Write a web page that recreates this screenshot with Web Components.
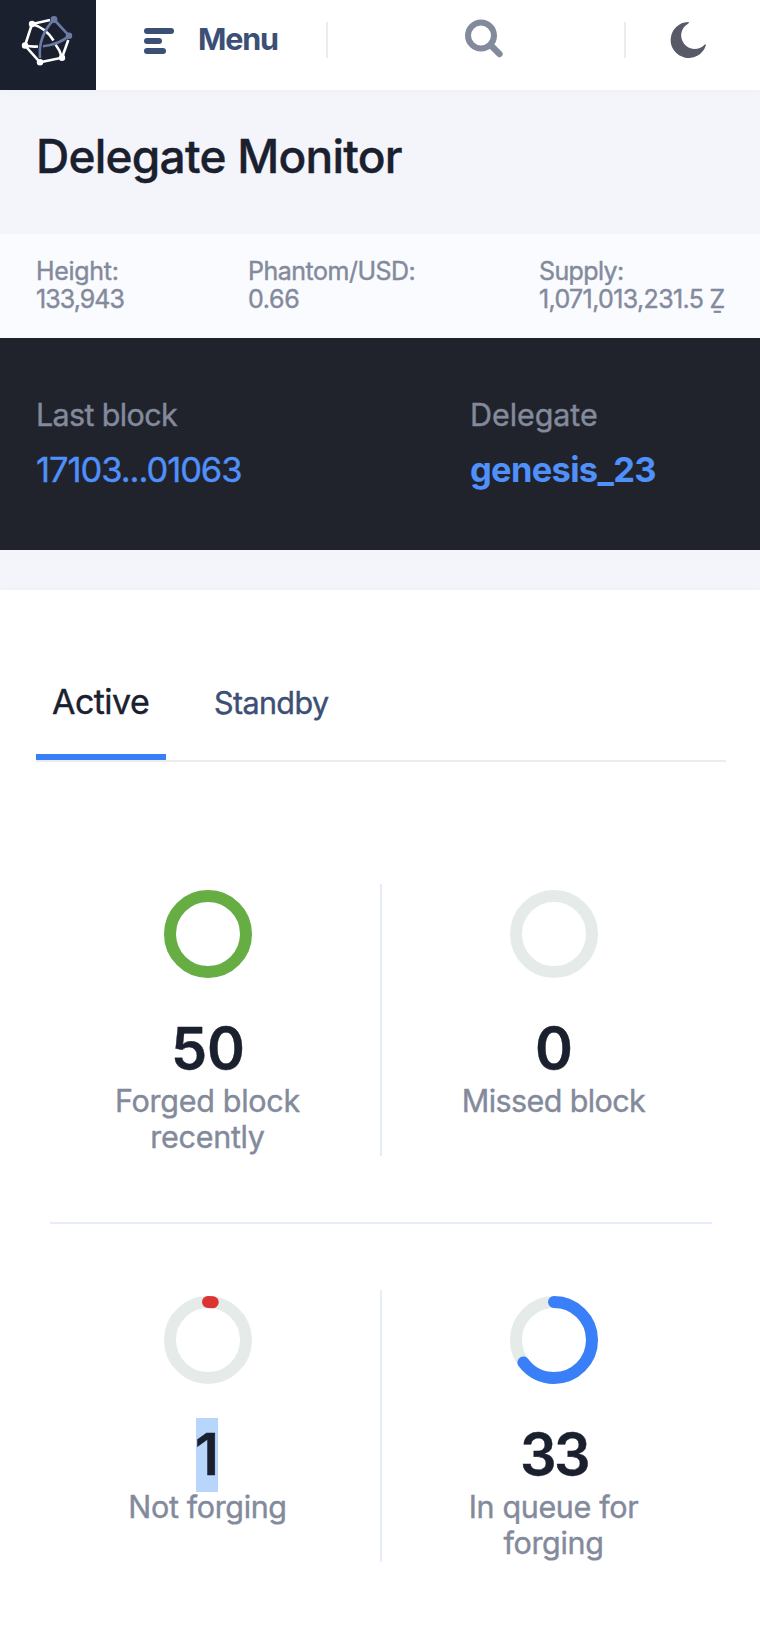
<!DOCTYPE html>
<html lang="en">
<head>
<meta charset="utf-8">
<title>Delegate Monitor</title>
<style>
  html, body { margin: 0; }
  body { background: #f4f5fa; font-family: Inter, "Liberation Sans", sans-serif; font-weight: 400; color: #1a202e; -webkit-text-stroke: .4px currentColor; }
</style>
</head>
<body>
<explorer-app></explorer-app>
<script>
const define = (name, html, setup) => {
  const template = document.createElement('template');
  template.innerHTML = html;
  customElements.define(name, class extends HTMLElement {
    connectedCallback() {
      if (this.shadowRoot) return;
      const root = this.attachShadow({ mode: 'open' });
      root.append(template.content.cloneNode(true));
      if (setup) setup(this, root);
    }
  });
};

define('network-logo', `
  <style>:host{display:block;flex:none;width:96px;height:90px;background:#1a202e}svg{display:block}</style>
  <svg width="96" height="90" viewBox="0 0 96 90" fill="none" stroke="#fff" stroke-width="2.6">
    <path d="M50 20 32 24 25 45.500 40 62.300 62 57.700 68.300 40M32 24Q46 28 53.500 40.500M55.500 44.500Q60 50 62 57.700M25 45.500Q31 47 38 46.500"/>
    <path stroke="#6b7aa3" d="M54 19.500 69 35.700Q60 44 43 46.300M54 19.500Q38 36 40 58"/>
    <g fill="#fff" stroke="none"><circle cx="32" cy="24" r="3.200"/><circle cx="62" cy="57.700" r="3.200"/><circle cx="40" cy="62.300" r="3.200"/><circle cx="25" cy="45.500" r="3.200"/></g>
    <g fill="#6b7aa3" stroke="none"><circle cx="54" cy="19.500" r="3.400"/><circle cx="69" cy="35.700" r="3.200"/></g>
  </svg>`);

define('app-header', `
  <style>
    :host{display:flex;height:90px;background:#fff;box-shadow:0 2px 8px rgba(40,50,110,.02)}
    .cell{box-sizing:border-box;height:80px;display:flex;align-items:center}
    .menu{width:230px;padding-left:48px;gap:24px;color:#3c4f75;font:700 30.5px/36px Inter,sans-serif;letter-spacing:-1.19px;-webkit-text-stroke:0}
    .menu span{margin-top:-2px}
    .menu svg{margin-top:2px}
    .search{width:296px;padding:0 0 4px 15px;justify-content:center}
    .theme{width:134px;padding-left:44px}
    i{width:2px;height:36px;margin-top:22px;background:#ececee;flex:none}
    svg{display:block;flex:none}
  </style>
  <network-logo></network-logo>
  <div class="cell menu">
    <svg width="30" height="26" fill="#3c4f75"><rect width="30" height="6" rx="3"/><rect y="10" width="18" height="6" rx="3"/><rect y="20" width="22" height="6" rx="3"/></svg>
    <span>Menu</span>
  </div>
  <i></i>
  <div class="cell search">
    <svg width="40" height="44" viewBox="464 15 40 44" fill="none" stroke="#838a9c" stroke-width="6" stroke-linecap="round"><circle cx="481" cy="34.500" r="13"/><path d="M490.500 44 499.500 53" stroke-width="6.400"/></svg>
  </div>
  <i></i>
  <div class="cell theme">
    <svg width="36" height="36" viewBox="670 22 36 36"><path fill="#585a68" d="M688 22A18 18 0 1 0 705.800 45.500Q706.200 43.500 704.500 44.700A13.500 13.500 0 1 1 688 23.700Q690 22.200 688 22Z"/></svg>
  </div>`);

define('page-title', `
  <style>
    :host{display:block;box-sizing:border-box;height:144px;padding:38px 36px 0}
    h1{margin:0;font:500 46px/56px Inter,sans-serif;letter-spacing:-.75px;color:#1a202e}
  </style><h1><slot></slot></h1>`);

define('info-item', `
  <style>
    :host{display:block;font-size:25px;line-height:28px;color:#838a9c;white-space:nowrap}
    div{letter-spacing:var(--a)} .v{letter-spacing:var(--b)}
  </style><div><slot name="label"></slot></div><div class="v"><slot></slot></div>`);

define('info-bar', `
  <style>
    :host{display:grid;grid-template-columns:212px 291px 1fr;box-sizing:border-box;height:104px;padding:23px 34px 0 36px;background:#fafbff}
  </style>
  <info-item style="--a:-.3px;--b:-.95px"><span slot="label">Height:</span>133,943</info-item>
  <info-item style="--a:-.5px;--b:-.3px"><span slot="label">Phantom/USD:</span>0.66</info-item>
  <info-item style="--a:-.61px;--b:-.64px"><span slot="label">Supply:</span>1,071,013,231.5 Ẕ</info-item>`);

define('last-block', `
  <style>
    :host{display:grid;grid-template-columns:434px 1fr;box-sizing:border-box;height:212px;padding:59px 36px 0;background:#20232b}
    .label{font-size:30.5px;line-height:36px;color:#838a9c;letter-spacing:-.64px}
    .value{display:block;margin-top:17px;font-size:34.5px;line-height:40px;color:#4f90fa;letter-spacing:-1.05px}
    .value.name{font-weight:700;letter-spacing:-.7px;-webkit-text-stroke:0}
  </style>
  <div><div class="label">Last block</div><a class="value">17103...01063</a></div>
  <div><div class="label" style="letter-spacing:-.07px">Delegate</div><a class="value name">genesis_23</a></div>`);

define('tab-bar', `
  <style>
    :host{display:flex;align-items:baseline;gap:32px;box-sizing:border-box;height:80px;margin:0 34px 0 36px;border-bottom:2px solid #ececee}
    .tab{box-sizing:border-box;height:78px;padding:0 16px;font-size:30.5px;line-height:40px;color:#3c4f75;letter-spacing:-.62px}
    .on{width:130px;font-size:34px;color:#1a202e;letter-spacing:-.55px;border-bottom:6px solid #387ff8}
  </style>
  <div class="tab on">Active</div><div class="tab">Standby</div>`);

define('progress-ring', `
  <style>:host{display:block;width:88px;height:88px}svg{display:block}</style>
  <svg width="88" height="88" viewBox="0 0 88 88" fill="none" stroke-width="12">
    <circle cx="44" cy="44" r="38" stroke="#e4ebe8"/>
    <circle class="arc" cx="44" cy="44" r="38" pathLength="100" stroke-linecap="round" transform="rotate(-90 44 44)"/>
  </svg>`, (host, root) => {
    const arc = root.querySelector('.arc');
    const value = Number(host.getAttribute('value'));
    if (!value) { arc.remove(); return; }
    arc.setAttribute('stroke', host.getAttribute('color'));
    if (value < 100) arc.setAttribute('stroke-dasharray', value + ' 100');
  });

define('stat-cell', `
  <style>
    :host{display:flex;flex-direction:column;align-items:center;box-sizing:border-box;height:272px;padding:6px 70px 0;text-align:center}
    .number{box-sizing:border-box;height:74px;margin:34px 0 -3px;font:600 57.5px/72px Inter,sans-serif;letter-spacing:var(--n,0);color:#1a202e}
    :host([selected]) .number{width:22px;margin-right:2px;background:#b8d6fb;display:flex;justify-content:center}
    .label{margin-left:-1px;font-size:30.5px;line-height:36px;color:#838a9c;letter-spacing:var(--l,-.4px)}
  </style>
  <progress-ring></progress-ring>
  <div class="number"><slot name="number"></slot></div>
  <div class="label"><slot></slot></div>`, (host, root) => {
    const ring = root.querySelector('progress-ring');
    ring.replaceWith(Object.assign(document.createElement('template'), {
      innerHTML: `<progress-ring value="${host.getAttribute('value')}" color="${host.getAttribute('color')}"></progress-ring>`
    }).content);
  });

define('forging-stats', `
  <style>
    :host{display:block;padding:122px 34px 0 36px}
    .row{display:grid;grid-template-columns:344px 2px 344px}
    .row i{background:#e6ecfb}
    hr{height:2px;border:0;margin:66px 14px;background:#e6ecfb}
  </style>
  <div class="row">
    <stat-cell value="100" color="#66ae44" style="--l:-.28px"><span slot="number">50</span>Forged block recently</stat-cell><i></i>
    <stat-cell value="0" style="--l:-.6px"><span slot="number">0</span>Missed block</stat-cell>
  </div>
  <hr>
  <div class="row">
    <stat-cell value="2" color="#dc3333" selected style="--l:-.36px"><span slot="number">1</span>Not forging</stat-cell><i></i>
    <stat-cell value="64.9" color="#387ff8" style="--l:-.36px;--n:-2.5px"><span slot="number">33</span>In queue for forging</stat-cell>
  </div>`);

define('explorer-app', `
  <style>
    :host{display:block;width:760px}
    app-header{position:relative}
    main{box-sizing:border-box;height:1040px;margin-top:40px;padding-top:92px;background:#fff;box-shadow:0 -2px 8px rgba(40,50,110,.02)}
  </style>
  <app-header></app-header>
  <page-title>Delegate Monitor</page-title>
  <info-bar></info-bar>
  <last-block></last-block>
  <main><tab-bar></tab-bar><forging-stats></forging-stats></main>`);
</script>
</body>
</html>
